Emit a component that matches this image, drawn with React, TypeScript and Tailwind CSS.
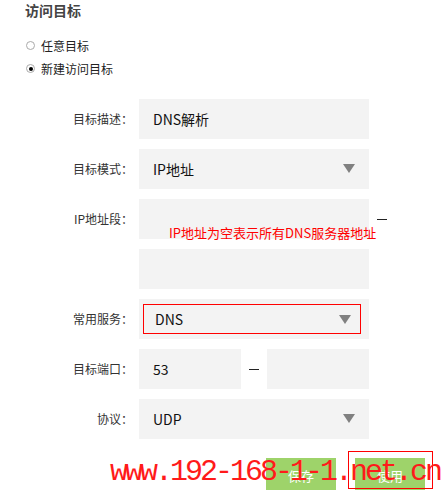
const ff = { fontFamily: '"Noto Sans CJK SC", sans-serif' };

function Arrow() {
  return (
    <svg width="12" height="9" viewBox="0 0 12 9" className="absolute right-[14px] top-[15px]">
      <path d="M0 0 H12 L6 9 Z" fill="#808080" />
    </svg>
  );
}

function Row({ label, children }: { label?: string; children: React.ReactNode }) {
  return (
    <div className="flex items-center h-[40px]">
      <div className="w-[133px] text-right text-[12px] text-[#333]">{label}</div>
      <div className="ml-[6px] flex items-center">{children}</div>
    </div>
  );
}

function Box({ text, select, w = 230 }: { text?: string; select?: boolean; w?: number }) {
  return (
    <div
      className="relative h-[40px] bg-[#f3f3f3] flex items-center pl-[14px] text-[14px] text-[#111]"
      style={{ width: w }}
    >
      {text}
      {select && <Arrow />}
    </div>
  );
}

function Radio({ checked, label }: { checked?: boolean; label: string }) {
  return (
    <div className="flex items-center h-[23px] pl-[26px]">
      <span className="w-[9px] h-[9px] rounded-full border border-[#aaa] bg-white flex items-center justify-center">
        {checked && <span className="w-[4px] h-[4px] rounded-full bg-black" />}
      </span>
      <span className="ml-[6px] text-[12px] text-[#222]">{label}</span>
    </div>
  );
}

export default function App() {
  return (
    <div className="relative w-[444px] h-[490px] overflow-hidden bg-white" style={ff}>
      <div className="pl-[25px] h-[20px] text-[14px] font-bold text-[#444] leading-[20px]">访问目标</div>
      <div className="mt-[14px]">
        <Radio label="任意目标" />
        <Radio checked label="新建访问目标" />
      </div>
      <div className="mt-[19px] flex flex-col gap-[10px]">
        <Row label="目标描述：">
          <Box text="DNS解析" />
        </Row>
        <Row label="目标模式：">
          <Box text="IP地址" select />
        </Row>
        <Row label="IP地址段：">
          <div className="relative flex items-center">
            <Box />
            <span className="ml-[8px] w-[10px] h-px bg-[#222]" />
            <span className="absolute left-[30px] top-[26px] text-[13px] leading-[15px] text-[#ff0000] whitespace-nowrap">
              IP地址为空表示所有DNS服务器地址
            </span>
          </div>
        </Row>
        <Row>
          <Box />
        </Row>
        <Row label="常用服务：">
          <div className="h-[40px] w-[230px] bg-[#f3f3f3] flex items-center pl-[4px]">
            <div className="relative h-[30px] w-[218px] border border-[#ff0000] flex items-center pl-[11px] text-[14px] text-[#111]">
              DNS
              <svg width="12" height="9" viewBox="0 0 12 9" className="absolute right-[9px] top-[10px]">
                <path d="M0 0 H12 L6 9 Z" fill="#808080" />
              </svg>
            </div>
          </div>
        </Row>
        <Row label="目标端口：">
          <Box text="53" w={102} />
          <span className="mx-[8px] w-[10px] h-px bg-[#222]" />
          <Box w={102} />
        </Row>
        <Row label="协议：">
          <Box text="UDP" select />
        </Row>
      </div>
      <div className="absolute left-[266px] top-[458px] flex gap-[19px]">
        <div className="w-[70px] h-[36px] bg-[#9ed36a] text-white text-[13px] flex items-center justify-center">保存</div>
        <div className="w-[70px] h-[36px] bg-[#9ed36a] text-white text-[13px] flex items-center justify-center">使用</div>
      </div>
      <div className="absolute left-[348px] top-[451px] w-[85px] h-[38px] border border-[#ff0000]" />
      <div
        className="absolute left-[110px] top-[454px] text-[30px] leading-[36px] tracking-[-3px] text-[#ff1a1a] whitespace-nowrap"
        style={{ fontFamily: '"Liberation Mono", monospace' }}
      >
        www.192-168-1-1.net.cn
      </div>
    </div>
  );
}
